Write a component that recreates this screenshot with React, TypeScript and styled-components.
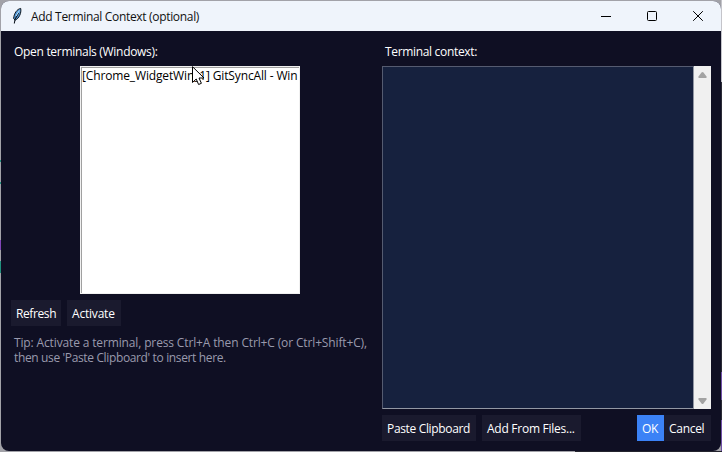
import React from 'react';
import styled, { createGlobalStyle } from 'styled-components';

const GlobalStyle = createGlobalStyle`
  * { box-sizing: border-box; }
  html, body { margin: 0; height: 100%; overflow: hidden; }
  body { font: 12px/15px "Open Sans", "Noto Sans", sans-serif; }
`;

const Desktop = styled.div`
  width: 722px;
  height: 452px;
  padding: 1px;
  background:
    linear-gradient(#8146b8, #8146b8) 0 240px / 1px 10px no-repeat,
    linear-gradient(#20917e, #20917e) 0 261px / 1px 12px no-repeat,
    linear-gradient(#20917e, #20917e) 0 160px / 1px 2px no-repeat,
    linear-gradient(#20917e, #20917e) 0 182px / 1px 2px no-repeat,
    linear-gradient(#24242e, #24242e) 575px 451px / 147px 1px no-repeat,
    linear-gradient(#c4c4ca 0 82px, #2b2b36 82px 372px, #7050a8 372px 400px, #2b2b36 400px 420px, #7050a8 420px) 721px 0 / 1px 452px no-repeat,
    #a2a2a8;
`;

const Window = styled.div`
  display: flex;
  flex-direction: column;
  width: 720px;
  height: 450px;
  border-radius: 8px;
  overflow: hidden;
  background: #0f0f23;
`;

const TitleBar = styled.header`
  display: flex;
  align-items: center;
  height: 30px;
  padding-left: 9px;
  background: #eff4fb;
  color: #111;
`;

const Text = styled.span<{ $track?: number }>`
  display: inline-block;
  white-space: pre;
  letter-spacing: ${(p) => p.$track ?? -0.3}px;
`;

const Title = styled(Text)`
  flex: 1;
  margin-left: 7px;
`;

const Feather = styled.svg`
  width: 14px;
  height: 18px;
`;

const Controls = styled.div`
  display: flex;
`;

const ControlButton = styled.div`
  display: flex;
  align-items: center;
  justify-content: center;
  width: 46px;
  height: 30px;
`;

const Body = styled.main`
  display: flex;
  flex: 1;
  gap: 10px;
  padding: 10px;
  color: #fff;
`;

const LeftPane = styled.section`
  display: flex;
  flex-direction: column;
  width: 361px;
`;

const RightPane = styled.section`
  display: flex;
  flex-direction: column;
  width: 329px;
`;

const Label = styled.div`
  height: 25px;
  padding: 3px 0 0 3px;
`;

const ListBox = styled.div`
  width: 220px;
  height: 228px;
  margin-left: 69px;
  border: 1px solid #f0f0f0;
  background: #fff;
  color: #000;
`;

const ListContent = styled.div`
  height: 226px;
  width: 218px;
  border-top: 1px solid #a0a0a0;
  border-left: 1px solid #a0a0a0;
  overflow: hidden;
`;

const ButtonRow = styled.div`
  display: flex;
  gap: 6px;
  margin-top: 6px;
`;

const Button = styled.div<{ $width: number; $primary?: boolean }>`
  display: flex;
  align-items: center;
  padding-left: 5px;
  width: ${(p) => p.$width}px;
  height: 26px;
  background: ${(p) => (p.$primary ? '#3b82f6' : '#1a1a2e')};
`;

const Confirm = styled.div`
  display: flex;
  margin-left: auto;
`;

const Tip = styled.div`
  display: flex;
  flex-direction: column;
  align-items: flex-start;
  padding: 9px 0 0 3px;
  color: #9a9aad;
`;

const Editor = styled.div`
  display: flex;
  height: 343px;
`;

const TextArea = styled.div`
  flex: 1;
  border: 1px solid;
  border-color: #555b70 #9297a3 #9297a3 #555b70;
  background: #16213e;
`;

const Scrollbar = styled.div`
  display: flex;
  flex-direction: column;
  justify-content: space-between;
  align-items: center;
  width: 17px;
  padding: 5px 0 4px;
  background: #f0f0f0;
  svg { display: block; }
`;

const Cursor = styled.svg`
  position: absolute;
  left: 192px;
  top: 66px;
`;

export default function App() {
  return (
    <>
      <GlobalStyle />
      <Desktop>
        <Window>
          <TitleBar>
            <Feather viewBox="0 0 14 18">
              <path d="M10.7 1.4C7 2 4 6.5 3.6 11.5L5.2 13.2C9 11.5 11.6 6 10.7 1.4Z" fill="#4f94d4" stroke="#101820" strokeWidth="1" />
              <path d="M8.5 6L5 12.5L4.3 16.5" fill="none" stroke="#101820" strokeWidth="1.1" />
              <path d="M9.4 3.5L6 9" fill="none" stroke="#b8e1fa" strokeWidth="1" />
            </Feather>
            <Title $track={-0.32}>Add Terminal Context (optional)</Title>
            <Controls>
              <ControlButton>
                <svg width="10" height="10"><path d="M0 5.5H10" stroke="#000" /></svg>
              </ControlButton>
              <ControlButton>
                <svg width="10" height="10"><rect x=".5" y=".5" width="9" height="9" rx="1" fill="none" stroke="#000" /></svg>
              </ControlButton>
              <ControlButton>
                <svg width="10" height="10"><path d="M.2.2L9.8 9.8M9.8.2L.2 9.8" stroke="#000" /></svg>
              </ControlButton>
            </Controls>
          </TitleBar>
          <Body>
            <LeftPane>
              <Label><Text>Open terminals (Windows):</Text></Label>
              <ListBox>
                <ListContent><Text $track={-0.14}>[Chrome_WidgetWin_1] GitSyncAll - Win</Text></ListContent>
              </ListBox>
              <ButtonRow>
                <Button $width={50}><Text $track={-0.4}>Refresh</Text></Button>
                <Button $width={54}><Text $track={-0.2}>Activate</Text></Button>
              </ButtonRow>
              <Tip>
                <Text $track={-0.14}>Tip: Activate a terminal, press Ctrl+A then Ctrl+C (or Ctrl+Shift+C),</Text>
                <Text $track={-0.36}>then use 'Paste Clipboard' to insert here.</Text>
              </Tip>
            </LeftPane>
            <RightPane>
              <Label><Text $track={-0.33}>Terminal context:</Text></Label>
              <Editor>
                <TextArea />
                <Scrollbar>
                  <svg width="9" height="8"><path d="M.5 7V5.5L3.5 1.5Q4.5.5 5.5 1.5L8.5 5.5V7Z" fill="#a3a3a3" /></svg>
                  <svg width="9" height="8"><path d="M.5 1V2.5L3.5 6.5Q4.5 7.5 5.5 6.5L8.5 2.5V1Z" fill="#a3a3a3" /></svg>
                </Scrollbar>
              </Editor>
              <ButtonRow>
                <Button $width={94}><Text $track={-0.34}>Paste Clipboard</Text></Button>
                <Button $width={99}><Text $track={-0.26}>Add From Files...</Text></Button>
                <Confirm>
                  <Button $width={27} $primary><Text>OK</Text></Button>
                  <Button $width={47}><Text>Cancel</Text></Button>
                </Confirm>
              </ButtonRow>
            </RightPane>
          </Body>
        </Window>
        <Cursor width="13" height="20" viewBox="0 0 13 20">
          <path d="M.5.7V16.5L4.2 13L6.6 18.5L9.4 17.3L7 12H12Z" fill="#fff" stroke="#000" />
        </Cursor>
      </Desktop>
    </>
  );
}
